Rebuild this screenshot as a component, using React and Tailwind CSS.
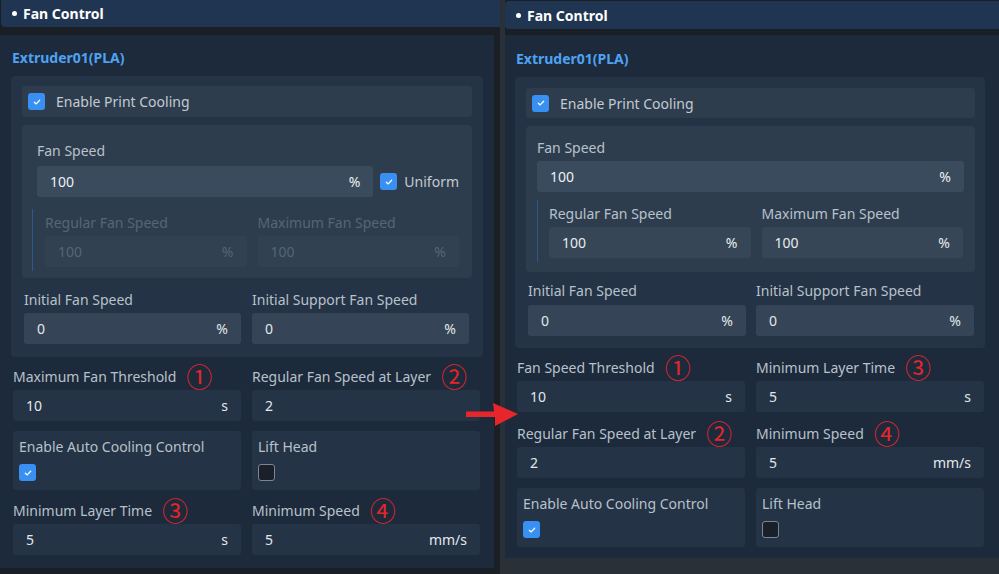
import React from 'react';

const Check = ({ on }) =>
  on ? (
    <span className="flex h-[17px] w-[17px] shrink-0 items-center justify-center rounded-[3px] bg-[#3891f2]">
      <svg viewBox="0 0 12 12" className="h-[10px] w-[10px]">
        <path d="M2.8 6.3 5 8.3 9.2 3.9" fill="none" stroke="#fff" strokeWidth="1.5" strokeLinecap="round" strokeLinejoin="round" />
      </svg>
    </span>
  ) : (
    <span className="block h-[17px] w-[17px] shrink-0 rounded-[3px] border border-[#7d8690] bg-[#19202a]" />
  );

const Mark = ({ n }) => (
  <span className="ml-[10px] font-['Noto_Sans_CJK_SC',sans-serif] text-[26px] leading-none text-[#e3262a]">{n}</span>
);

const Label = ({ children, mark, dim }) => (
  <div className={`flex h-5 items-center text-[14px] ${dim ? 'text-[#566574]' : 'text-[#b8c1cb]'}`}>
    {children}
    {mark && <Mark n={mark} />}
  </div>
);

const Input = ({ value, unit, tone, className = '' }) => (
  <div className={`flex h-[31px] items-center justify-between rounded-[3px] px-[13px] text-[14px] ${tone} ${className}`}>
    <span>{value}</span>
    <span>{unit}</span>
  </div>
);

const OUTER = 'bg-[#243346] text-[#e3e7eb]';
const INITIAL = 'bg-[#354557] text-[#e3e7eb]';
const MAIN = 'bg-[#3a4b5d] text-[#eef1f4]';
const SUB = 'bg-[#364657] text-[#e9ecef]';
const OFF = 'bg-[#314152] text-[#566574]';

const Field = ({ label, mark, value, unit, tone, gap = 'mt-[4px]', dim }) => (
  <div>
    <Label mark={mark} dim={dim}>{label}</Label>
    <Input value={value} unit={unit} tone={tone} className={gap} />
  </div>
);

const ToggleCard = ({ label, on }) => (
  <div className="h-[59px] rounded-[3px] bg-[#243345] pl-[6px] pt-[5px]">
    <Label>{label}</Label>
    <div className="mt-[8px]">
      <Check on={on} />
    </div>
  </div>
);

const Header = ({ className }) => (
  <div className={`flex items-center bg-[#1f3551] text-[14px] font-bold text-white ${className}`}>
    <span className="mr-[6px] h-[5px] w-[5px] rounded-full bg-white" />
    Fan Control
  </div>
);

const Extruder = ({ className }) => (
  <div className={`h-[18px] text-[14px] font-bold leading-[18px] text-[#4fa2f3] ${className}`}>Extruder01(PLA)</div>
);

function Before() {
  return (
    <div className="flex w-[500px] shrink-0 flex-col bg-[#1a1e25]">
      <Header className="ml-px h-[27px] rounded-bl-[4px] pl-[11px]" />
      <div className="mr-[6px] mt-[8px] h-[533px] bg-[#1c2a3b] pt-[14px]">
        <Extruder className="pl-[12px]" />
        <div className="mx-[11px] mt-[9px] rounded-[4px] bg-[#243345] px-[11px] pb-[13px] pt-[10px]">
          <div className="flex h-[31px] items-center gap-[11px] rounded-[3px] bg-[#2e3d4e] px-[6px] text-[14px] text-[#c3cad2]">
            <Check on />
            Enable Print Cooling
          </div>
          <div className="mt-[8px] rounded-[4px] bg-[#2e3d4e] pb-[7px] pl-[10px] pr-[13px] pt-[15px]">
            <div className="pl-[5px]">
              <Label>Fan Speed</Label>
              <div className="mt-[6px] flex items-center gap-[7px]">
                <Input value="100" unit="%" tone={MAIN} className="flex-1" />
                <Check on />
                <span className="text-[14px] text-[#c3cad2]">Uniform</span>
              </div>
            </div>
            <div className="mt-[12px] grid grid-cols-2 gap-x-[11px] border-l border-[#2c5987] pb-[4px] pl-[12px] pt-[3px]">
              <Field dim label="Regular Fan Speed" value="100" unit="%" tone={OFF} />
              <Field dim label="Maximum Fan Speed" value="100" unit="%" tone={OFF} />
            </div>
          </div>
          <div className="ml-[2px] mr-[3px] mt-[11px] grid grid-cols-2 gap-x-[11px]">
            <Field label="Initial Fan Speed" value="0" unit="%" tone={INITIAL} />
            <Field label="Initial Support Fan Speed" value="0" unit="%" tone={INITIAL} />
          </div>
        </div>
        <div className="grid grid-cols-2 gap-x-[11px] pl-[13px] pr-[14px]">
          <div className="mt-[9px]">
            <Field label="Maximum Fan Threshold" mark="①" value="10" unit="s" tone={OUTER} />
          </div>
          <div className="mt-[9px]">
            <Field label="Regular Fan Speed at Layer" mark="②" value="2" tone={OUTER} />
          </div>
          <div className="mt-[10px]">
            <ToggleCard label="Enable Auto Cooling Control" on />
          </div>
          <div className="mt-[10px]">
            <ToggleCard label="Lift Head" />
          </div>
          <div className="mt-[10px]">
            <Field label="Minimum Layer Time" mark="③" value="5" unit="s" tone={OUTER} />
          </div>
          <div className="mt-[10px]">
            <Field label="Minimum Speed" mark="④" value="5" unit="mm/s" tone={OUTER} />
          </div>
        </div>
      </div>
    </div>
  );
}

function After() {
  return (
    <div className="flex flex-1 flex-col bg-[#2a3037] pl-[5px]">
      <div className="bg-[#1a1e25] pt-px">
        <Header className="h-[28px] rounded-l-[4px] pl-[11px]" />
        <div className="mt-[6px] h-[523px] bg-[#1c2a3b] pt-[15px]">
          <Extruder className="pl-[11px]" />
          <div className="ml-[10px] mr-[14px] mt-[9px] rounded-[4px] bg-[#243345] pb-[12px] pl-[11px] pr-[10px] pt-[11px]">
            <div className="flex h-[30px] items-center gap-[11px] rounded-[3px] bg-[#2e3d4e] px-[6px] text-[14px] text-[#c3cad2]">
              <Check on />
              Enable Print Cooling
            </div>
            <div className="mt-[8px] rounded-[4px] bg-[#2e3d4e] pb-[10px] pl-[11px] pr-[11px] pt-[11px]">
              <Field label="Fan Speed" value="100" unit="%" tone={MAIN} />
              <div className="mt-[8px] grid grid-cols-2 gap-x-[11px] border-l border-[#2c5987] pb-[4px] pl-[11px] pr-px pt-[3px]">
                <Field label="Regular Fan Speed" value="100" unit="%" tone={SUB} />
                <Field label="Maximum Fan Speed" value="100" unit="%" tone={SUB} />
              </div>
            </div>
            <div className="ml-[2px] mr-px mt-[8px] grid grid-cols-2 gap-x-[10px]">
              <Field label="Initial Fan Speed" value="0" unit="%" tone={INITIAL} gap="mt-[5px]" />
              <Field label="Initial Support Fan Speed" value="0" unit="%" tone={INITIAL} gap="mt-[5px]" />
            </div>
          </div>
          <div className="grid grid-cols-2 gap-x-[11px] pl-[12px] pr-[15px]">
            <div className="mt-[9px]">
              <Field label="Fan Speed Threshold" mark="①" value="10" unit="s" tone={OUTER} />
            </div>
            <div className="mt-[9px]">
              <Field label="Minimum Layer Time" mark="③" value="5" unit="s" tone={OUTER} />
            </div>
            <div className="mt-[11px]">
              <Field label="Regular Fan Speed at Layer" mark="②" value="2" tone={OUTER} />
            </div>
            <div className="mt-[11px]">
              <Field label="Minimum Speed" mark="④" value="5" unit="mm/s" tone={OUTER} />
            </div>
            <div className="mt-[10px]">
              <ToggleCard label="Enable Auto Cooling Control" on />
            </div>
            <div className="mt-[10px]">
              <ToggleCard label="Lift Head" />
            </div>
          </div>
        </div>
      </div>
    </div>
  );
}

export default function App() {
  return (
    <div className="relative flex h-[574px] w-[999px] overflow-hidden bg-[#1a1e25] font-['Noto_Sans',sans-serif]">
      <Before />
      <After />
      {/* red pointer between the two versions */}
      <svg className="absolute left-[464px] top-[402px] h-[26px] w-[56px]" viewBox="0 0 56 26">
        <path d="M2 9.5 H30 L29 1 L54 12 L31 24 L31 15 H2 Z" fill="#e6262b" strokeLinejoin="round" />
      </svg>
    </div>
  );
}
